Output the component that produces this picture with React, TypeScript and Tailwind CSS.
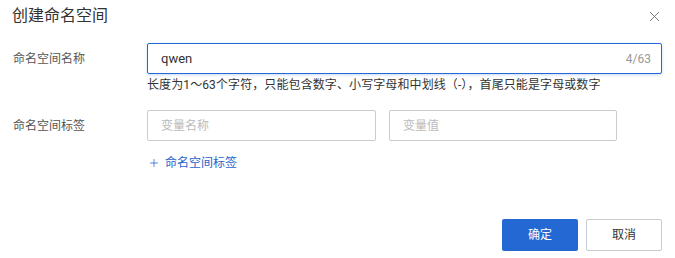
import { X, Plus } from "lucide-react";

export default function App() {
  return (
    <div
      className="w-[675px] h-[258px] bg-white text-[#333] overflow-hidden"
      style={{ fontFamily: 'Roboto, "Noto Sans CJK SC", sans-serif' }}
    >
      <div className="h-[32px] flex items-center justify-between pl-[12px] pr-[12px]">
        <h1 className="text-[16px] text-[#333] leading-none">创建命名空间</h1>
        <X className="w-[17px] h-[17px] text-[#666]" strokeWidth={1.2} />
      </div>

      <div className="mt-[11px] flex">
        <div className="w-[147px] shrink-0 pl-[13px] h-[31px] flex items-center text-[12px] text-[#555]">命名空间名称</div>
        <div>
          <div className="w-[515px] h-[31px] border border-[#2468d3] rounded-[2px] flex items-center justify-between pl-[13px] pr-[10px] shadow-[0_1px_3px_rgba(36,104,211,0.25)]">
            <span className="text-[13px] text-[#333]">qwen</span>
            <span className="text-[12px] text-[#999]">4/63</span>
          </div>
          <p className="mt-[3px] leading-[16px] text-[12px] text-[#333] tracking-[0.1px]">
            长度为1～63个字符，只能包含数字、小写字母和中划线（-），首尾只能是字母或数字
          </p>
        </div>
      </div>

      <div className="mt-[17px] flex">
        <div className="w-[147px] shrink-0 pl-[13px] h-[31px] flex items-center text-[12px] text-[#555]">命名空间标签</div>
        <div>
          <div className="flex gap-[13px]">
            <div className="w-[229px] h-[31px] border border-[#c8cbd0] rounded-[2px] flex items-center px-[13px] text-[12px] text-[#bbb]">
              变量名称
            </div>
            <div className="w-[228px] h-[31px] border border-[#c8cbd0] rounded-[2px] flex items-center px-[13px] text-[12px] text-[#bbb]">
              变量值
            </div>
          </div>
          <div className="mt-[14px] flex items-center gap-[5px] text-[12px] leading-[16px] text-[#1f63c9]">
            <Plus className="w-[12px] h-[12px] ml-[1px]" strokeWidth={1.5} />
            <span>命名空间标签</span>
          </div>
        </div>
      </div>

      <div className="mt-[48px] flex justify-end gap-[8px] pr-[13px]">
        <button className="w-[76px] h-[32px] bg-[#2468d3] text-white text-[12px] rounded-[2px]">确定</button>
        <button className="w-[76px] h-[32px] border border-[#c8cbd0] bg-white text-[#333] text-[12px] rounded-[2px]">取消</button>
      </div>
    </div>
  );
}
